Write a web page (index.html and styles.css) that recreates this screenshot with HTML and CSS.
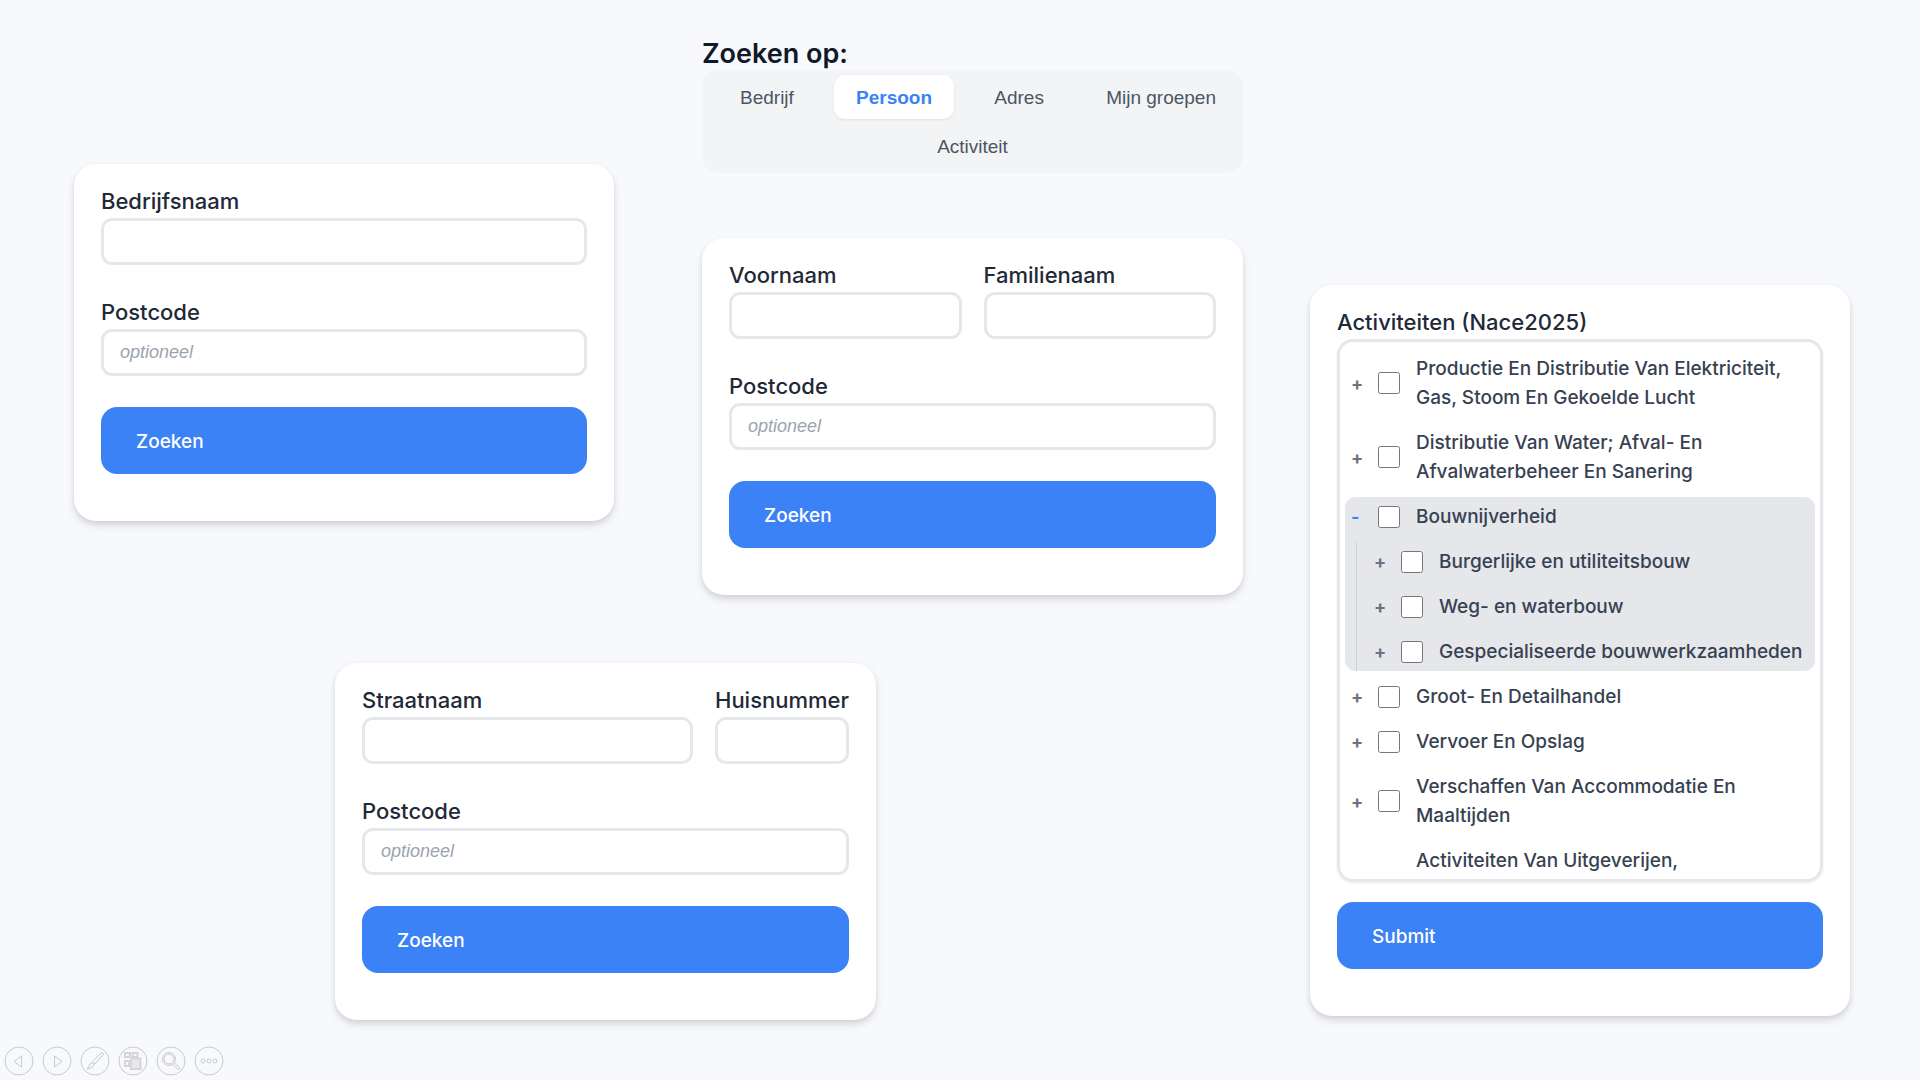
FILE: index.html
```
<!DOCTYPE html>
<html lang="nl">
<head>
    <meta charset="UTF-8">
    <meta name="viewport" content="width=device-width, initial-scale=1.0">
    <title>Zoeken</title>
    <link rel="stylesheet" href="styles.css">
</head>
<body>
    <main class="slide">
        <div class="searches">
            <!-- Bedrijf -->
            <section class="panel panel-company">
                <form class="card">
                    <div class="field">
                        <label for="company_name">Bedrijfsnaam</label>
                        <input type="text" id="company_name">
                    </div>
                    <div class="field">
                        <label for="company_postcode">Postcode</label>
                        <input type="text" id="company_postcode" placeholder="optioneel">
                    </div>
                    <button type="button" class="submit">Zoeken</button>
                </form>
            </section>

            <!-- Persoon -->
            <section class="panel panel-person">
                <h1>Zoeken op:</h1>
                <nav class="tabs">
                    <div class="tab-row">
                        <button type="button" class="tab">Bedrijf</button>
                        <button type="button" class="tab active">Persoon</button>
                        <button type="button" class="tab">Adres</button>
                        <button type="button" class="tab">Mijn groepen</button>
                    </div>
                    <div class="tab-row last">
                        <button type="button" class="tab">Activiteit</button>
                    </div>
                </nav>
                <form class="card">
                    <div class="field-row">
                        <div class="field grow">
                            <label for="first_name">Voornaam</label>
                            <input type="text" id="first_name">
                        </div>
                        <div class="field grow">
                            <label for="last_name">Familienaam</label>
                            <input type="text" id="last_name">
                        </div>
                    </div>
                    <div class="field">
                        <label for="person_postcode">Postcode</label>
                        <input type="text" id="person_postcode" placeholder="optioneel">
                    </div>
                    <button type="button" class="submit">Zoeken</button>
                </form>
            </section>

            <!-- Adres -->
            <section class="panel panel-address">
                <form class="card">
                    <div class="field-row">
                        <div class="field grow">
                            <label for="street">Straatnaam</label>
                            <input type="text" id="street">
                        </div>
                        <div class="field">
                            <label for="house_number">Huisnummer</label>
                            <input type="text" id="house_number" size="1">
                        </div>
                    </div>
                    <div class="field">
                        <label for="address_postcode">Postcode</label>
                        <input type="text" id="address_postcode" placeholder="optioneel">
                    </div>
                    <button type="button" class="submit">Zoeken</button>
                </form>
            </section>
        </div>

        <!-- Activiteit -->
        <section class="panel panel-activity">
            <form class="card">
                <h2 class="tree-title" id="tree_title">Activiteiten (Nace2025)</h2>
                <ul class="tree" aria-labelledby="tree_title">
                    <li class="node">
                        <div class="row">
                            <button type="button" class="toggle">+</button>
                            <input type="checkbox" id="nace_d">
                            <label for="nace_d">Productie En Distributie Van Elektriciteit, Gas, Stoom En Gekoelde Lucht</label>
                        </div>
                    </li>
                    <li class="node">
                        <div class="row">
                            <button type="button" class="toggle">+</button>
                            <input type="checkbox" id="nace_e">
                            <label for="nace_e">Distributie Van Water; Afval- En Afvalwaterbeheer En Sanering</label>
                        </div>
                    </li>
                    <li class="node open">
                        <div class="row">
                            <button type="button" class="toggle minus">-</button>
                            <input type="checkbox" id="nace_f">
                            <label for="nace_f">Bouwnijverheid</label>
                        </div>
                        <ul class="children">
                            <li class="row">
                                <button type="button" class="toggle">+</button>
                                <input type="checkbox" id="nace_41">
                                <label for="nace_41">Burgerlijke en utiliteitsbouw</label>
                            </li>
                            <li class="row">
                                <button type="button" class="toggle">+</button>
                                <input type="checkbox" id="nace_42">
                                <label for="nace_42">Weg- en waterbouw</label>
                            </li>
                            <li class="row">
                                <button type="button" class="toggle">+</button>
                                <input type="checkbox" id="nace_43">
                                <label for="nace_43">Gespecialiseerde bouwwerkzaamheden</label>
                            </li>
                        </ul>
                    </li>
                    <li class="node">
                        <div class="row">
                            <button type="button" class="toggle">+</button>
                            <input type="checkbox" id="nace_g">
                            <label for="nace_g">Groot- En Detailhandel</label>
                        </div>
                    </li>
                    <li class="node">
                        <div class="row">
                            <button type="button" class="toggle">+</button>
                            <input type="checkbox" id="nace_h">
                            <label for="nace_h">Vervoer En Opslag</label>
                        </div>
                    </li>
                    <li class="node">
                        <div class="row">
                            <button type="button" class="toggle">+</button>
                            <input type="checkbox" id="nace_i">
                            <label for="nace_i">Verschaffen Van Accommodatie En Maaltijden</label>
                        </div>
                    </li>
                    <li class="node">
                        <div class="row">
                            <button type="button" class="toggle">+</button>
                            <input type="checkbox" id="nace_j">
                            <label for="nace_j">Activiteiten Van Uitgeverijen, Omroepactiviteiten, Productie En Distributie Van Content</label>
                        </div>
                    </li>
                </ul>
                <button type="button" class="submit">Submit</button>
            </form>
        </section>
    </main>

    <!-- Presentation controls -->
    <div class="controls">
        <button type="button" class="control" aria-label="Vorige">
            <svg viewBox="0 0 30 30"><circle cx="15" cy="15" r="14"/><path d="M17.5 10v11l-7.500-5.500z"/></svg>
        </button>
        <button type="button" class="control" aria-label="Volgende">
            <svg viewBox="0 0 30 30"><circle cx="15" cy="15" r="14"/><path d="M12.500 10v11l7.500-5.500z"/></svg>
        </button>
        <button type="button" class="control" aria-label="Pen">
            <svg viewBox="0 0 30 30"><circle cx="15" cy="15" r="14"/><path d="M12.500 15.500l8.500-8.500q2-1 2.500 1l-8.500 10zM12.500 15.500l2.500 2.500M12 16.500q-3 1-3 4l-2 2.500q5 0 7-4z"/></svg>
        </button>
        <button type="button" class="control" aria-label="Dia's">
            <svg viewBox="0 0 30 30"><circle cx="15" cy="15" r="14"/><path class="thick" d="M7 7h5v4h-5zM14.500 7h5v4h-5zM7 15h4v5h-4z"/><path class="thick front" d="M13 12.500h9.500v10.500h-9.500z"/></svg>
        </button>
        <button type="button" class="control" aria-label="Inzoomen">
            <svg viewBox="0 0 30 30"><circle cx="15" cy="15" r="14"/><circle cx="13" cy="13" r="6.500"/><circle cx="13" cy="13" r="5"/><path d="M17 18.500l5 5q2 0 1.500-2l-5-4.500"/></svg>
        </button>
        <button type="button" class="control" aria-label="Meer">
            <svg viewBox="0 0 30 30"><circle cx="15" cy="15" r="14"/><circle cx="9" cy="15" r="2"/><circle cx="15" cy="15" r="2"/><circle cx="21" cy="15" r="2"/></svg>
        </button>
    </div>
</body>
</html>
```
FILE: styles.css
```
* {
    box-sizing: border-box;
}
body {
    margin: 0;
    min-height: 100vh;
    display: flex;
    flex-direction: column;
    font-family: Inter, sans-serif;
    color: #1f2937;
    background-color: #f8f9fd;
}
.slide {
    flex: 1;
    display: grid;
    grid-template-columns: 1169fr 540fr;
    column-gap: 67px;
    padding: 28px 70px 0 74px;
}
/* the address card sits between the two cards above it */
.searches {
    display: grid;
    grid-template-columns: 261fr 279fr 88fr 174fr 367fr;
    align-content: start;
}
.panel {
    min-width: 0;
}
.panel-company {
    grid-area: 1 / 1 / 2 / 3;
    padding-top: 136px;
}
.panel-person {
    grid-area: 1 / 4 / 2 / 6;
}
.panel-address {
    grid-area: 2 / 2 / 3 / 5;
    padding-top: 68px;
}
.panel-activity {
    padding-top: 257px;
}

h1 {
    margin: 0;
    padding-top: 10px;
    font-size: 27px;
    line-height: 32px;
    font-weight: 600;
    color: #111827;
}
.tabs {
    display: flex;
    flex-direction: column;
    gap: 5px;
    margin-bottom: 65px;
    padding: 5px;
    border-radius: 16px;
    background-color: #f3f4f6;
}
.tab-row {
    display: flex;
    justify-content: space-between;
    padding-left: 11px;
}
.tab-row.last {
    justify-content: center;
    padding-left: 0;
}
.tab {
    padding: 1px 22px 0;
    border: none;
    border-radius: 11px;
    background: none;
    font-family: "Liberation Sans", Arial, sans-serif;
    font-size: 19px;
    line-height: 43px;
    color: #4b5563;
    cursor: pointer;
}
.tab.active {
    background-color: white;
    color: #3b82f6;
    font-weight: bold;
    box-shadow: 0 1px 3px rgba(0,0,0,0.08);
}

.card {
    display: flex;
    flex-direction: column;
    padding: 21px 27px 47px;
    border-radius: 22px;
    background-color: white;
    box-shadow: 0 5px 8px rgba(0,0,0,0.1), 0 2px 5px rgba(0,0,0,0.08);
}
.field-row {
    display: flex;
    gap: 22px;
}
.field {
    display: flex;
    flex-direction: column;
    margin-bottom: 31px;
}
.field.grow {
    flex: 1;
    min-width: 0;
}
.field label,
.tree-title {
    margin: 0;
    font-size: 22px;
    line-height: 33px;
    font-weight: 500;
}
.field input {
    width: 100%;
    height: 47px;
    padding: 0 16px;
    border: 3px solid #e5e7eb;
    border-radius: 11px;
    background-color: white;
    font-family: "Liberation Sans", Arial, sans-serif;
    font-size: 18px;
}
.field input::placeholder {
    color: #9ca3af;
    font-style: italic;
}
.submit {
    height: 67px;
    padding: 2px 35px 0;
    border: none;
    border-radius: 16px;
    background-color: #3b82f6;
    color: white;
    font-family: inherit;
    font-size: 19px;
    font-weight: 500;
    text-align: left;
    cursor: pointer;
}

.tree {
    max-height: 543px;
    margin: 0 0 20px;
    padding: 7px 5px;
    overflow-y: auto;
    scrollbar-width: none;
    list-style: none;
    border: 3px solid #e5e7eb;
    border-radius: 16px;
    box-shadow: 0 1px 3px rgba(0,0,0,0.08);
}
.node {
    margin-bottom: 6px;
    border-radius: 11px;
}
.node.open {
    background-color: #e5e7eb;
}
.row {
    display: flex;
    align-items: center;
    padding: 5px 10px 5px 6px;
}
.row input {
    flex: none;
    width: 22px;
    height: 22px;
    margin: 0 16px 0 10px;
}
.row label {
    font-size: 19px;
    line-height: 29px;
    font-weight: 500;
    color: #374151;
}
.toggle {
    flex: none;
    width: 17px;
    padding: 0;
    border: none;
    background: none;
    font-family: inherit;
    font-size: 18px;
    font-weight: 700;
    text-align: left;
    color: #6b7280;
    cursor: pointer;
}
.toggle.minus {
    color: #3b82f6;
}
.children {
    display: flex;
    flex-direction: column;
    gap: 6px;
    margin: 6px 0 0 11px;
    padding-left: 11px;
    list-style: none;
    border-left: 1px dotted #b5b9c0;
}

.controls {
    display: flex;
    gap: 8px;
    padding: 0 4px 4px;
}
.control {
    width: 30px;
    height: 30px;
    padding: 0;
    border: none;
    background: none;
    cursor: pointer;
}
.control svg {
    display: block;
    fill: none;
    stroke: #cacaca;
    stroke-width: 1;
}
.control .thick {
    stroke: #d6d6d8;
    stroke-width: 2;
}
.control .front {
    fill: #e8e8ec;
}
```
